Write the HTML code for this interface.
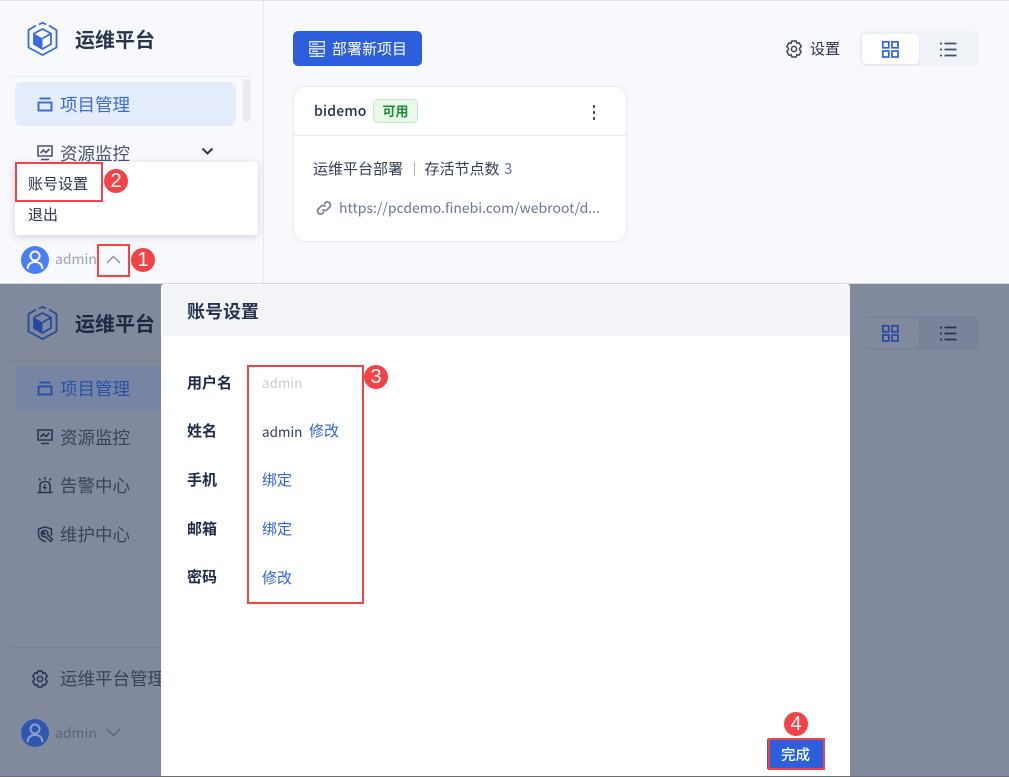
<!DOCTYPE html>
<html lang="zh-CN"><head><meta charset="utf-8"><title>运维平台</title>
<style>
html,body{margin:0;padding:0;width:1009px;height:777px;overflow:hidden;background:#f8f9fd}
body{position:relative;font-family:"Noto Sans CJK SC","Liberation Sans",sans-serif;color:#1e2a45}
.a{position:absolute}
.t{position:absolute;white-space:nowrap;line-height:24px;height:24px}
svg{position:absolute;overflow:visible;fill:none}
.rb{position:absolute;border:2px solid #f44346;box-sizing:border-box}
.bd{position:absolute;width:24px;height:24px;border-radius:50%;background:#f44346;color:#fff;font:20px/24px "Liberation Sans",sans-serif;text-align:center}
</style></head><body>
<div class="a" style="left:0;top:0;width:1009px;height:1px;background:#e2e2e2"></div>
<div class="a" style="left:263px;top:1px;width:1px;height:282px;background:#e6e8ef"></div>
<div class="a" style="left:10px;top:76px;width:243px;height:1px;background:#e8eaf0"></div>

<!-- top logo -->
<svg style="left:27px;top:22px" width="31" height="34" viewBox="0 0 31 34"><path d="M9 3.5 1.500 8v17.500L15.500 33 29.500 25.500V8L22 3.500" stroke="#386bdf" stroke-width="1.800"/><path d="M12 2.500 15.500.8 19 2.500" stroke="#386bdf" stroke-width="1.800"/><path d="M7 11.500 15.500 7 24 11.500V22L15.500 27 7 22Z" stroke="#386bdf" stroke-width="1.800"/><path d="M7 11.500 15.500 16.500V27L7 22Z" fill="#386bdf"/><path d="M15.500 16.500 24 11.500" stroke="#386bdf" stroke-width="1.800"/></svg>
<div class="t" style="left:75px;top:27px;font-size:20px;font-weight:700;color:#26344f">运维平台</div>

<div class="a" style="left:15px;top:82px;width:221px;height:44px;border-radius:6px;background:#e5edfc"></div>
<div class="a" style="left:243px;top:79px;width:8px;height:43px;border-radius:4px;background:#e9ebf0"></div>
<svg style="left:37px;top:97px" width="16" height="15" stroke="#3f6fdd" stroke-width="2"><path d="M2.500 1.500H13.500M.5 5.500H15.500M1.500 5.500V13.500H14.500V5.500"/></svg>
<div class="t" style="left:60px;top:93px;font-size:17.500px;color:#3b6ade">项目管理</div>
<svg style="left:37px;top:145px" width="16" height="16" stroke="#4a5670" stroke-width="1.600"><path d="M1 1H15V11H1ZM4 14.500H12M3.500 8 6.500 5 9 7.500 12.500 4"/></svg>
<div class="t" style="left:60px;top:142px;font-size:17.500px;color:#47536b">资源监控</div>
<svg style="left:201px;top:147px" width="13" height="9" stroke="#2a3650" stroke-width="2"><path d="M1.500 1.500 6.500 6.500 11.500 1.500"/></svg>
<div class="a" style="left:10px;top:174px;width:243px;height:1px;background:#e8eaf0"></div>

<!-- dropdown -->
<div class="a" style="left:15px;top:162px;width:243px;height:73px;background:#fff;border-radius:3px;box-shadow:0 2px 8px rgba(40,50,80,.18)"></div>
<div class="t" style="left:28px;top:172px;font-size:15px;color:#26324b">账号设置</div>
<div class="t" style="left:28px;top:203px;font-size:15px;color:#26324b">退出</div>
<div class="rb" style="left:15px;top:162px;width:88px;height:40px"></div>
<div class="bd" style="left:104px;top:169px">2</div>

<!-- top user -->
<div class="a" style="left:21px;top:246px;width:28px;height:28px;border-radius:50%;background:#4a7ffa"></div>
<svg style="left:21px;top:246px" width="28" height="28" stroke="#fff" stroke-width="2"><circle cx="14" cy="10" r="4.500"/><path d="M6.500 23C7 18 10 16 14 16S21 18 21.500 23"/></svg>
<div class="t" style="left:55px;top:247px;font-size:14px;color:#9aa3b3">admin</div>
<svg style="left:106px;top:255px" width="15" height="9" stroke="#8b94a5" stroke-width="1.400"><path d="M1 8 7.500 1.500 14 8"/></svg>
<div class="rb" style="left:97px;top:244px;width:33px;height:33px"></div>
<div class="bd" style="left:131px;top:248px">1</div>

<!-- main top -->
<div class="a" style="left:293px;top:31px;width:129px;height:35px;border-radius:5px;background:#2d5fdc"></div>
<svg style="left:309px;top:41px" width="17" height="17" stroke="#dfe7fb" stroke-width="1.300"><path d="M.7.700H15.300V5.500H.7ZM.7 7.800H15.300V12.500H.7ZM8 12.500V15M.7 15.300H15.300M3 3.100H9M3 10.200H9"/></svg>
<div class="t" style="left:332px;top:37px;font-size:15px;color:#fff">部署新项目</div>

<div class="a" style="left:293px;top:86px;width:334px;height:156px;box-sizing:border-box;background:#fff;border:1px solid #e6e9f0;border-radius:12px"></div>
<div class="a" style="left:294px;top:135px;width:332px;height:1px;background:#e8ebf1"></div>
<div class="t" style="left:314px;top:99px;font-size:14px;font-weight:500;letter-spacing:.2px;color:#25314a">bidemo</div>
<div class="a" style="left:373px;top:99px;width:45px;height:24px;box-sizing:border-box;background:#e9f8e9;border:1px solid #c1e9c3;border-radius:5px;color:#1f8a39;font-size:13px;font-weight:700;line-height:22px;text-align:center">可用</div>
<div class="a" style="left:592.500px;top:105px;width:2px;height:3px;border-radius:1px;background:#2a3650;box-shadow:0 6px 0 #2a3650,0 12px 0 #2a3650"></div>
<div class="t" style="left:313px;top:157px;font-size:15px;color:#313d55">运维平台部署</div>
<div class="a" style="left:414px;top:162px;width:1px;height:14px;background:#a8b0bd"></div>
<div class="t" style="left:424.500px;top:157px;font-size:15px;color:#313d55">存活节点数</div>
<div class="t" style="left:504px;top:157px;font-size:15px;color:#5a6ec4">3</div>
<svg style="left:316px;top:200px" width="16" height="16" stroke="#6f7a8e" stroke-width="1.600"><path d="M6.500 9.500C8 11 10 10.800 11.200 9.600L14 6.800C16 4.500 12.500 .300 9.800 2.400L8 4.200M9.500 6.500C8 5 6 5.200 4.800 6.400L2 9.200C0 11.500 3.500 15.700 6.200 13.600L8 11.800"/></svg>
<div class="t" style="left:339px;top:196px;font-size:14px;color:#6c788d">https://pcdemo.finebi.com/webroot/d...</div>

<svg style="left:785px;top:40px" width="18" height="18" stroke="#3d4860" stroke-width="1.500"><path d="M6.800 1H11.200L11.800 3.400 14 2.700 16.200 6.500 14.500 8.500 14.500 9.500 16.200 11.500 14 15.300 11.800 14.600 11.200 17H6.800L6.200 14.600 4 15.300 1.800 11.500 3.500 9.500V8.500L1.800 6.500 4 2.700 6.200 3.400Z" stroke-linejoin="round"/><circle cx="9" cy="9" r="2.600"/></svg>
<div class="t" style="left:810px;top:37px;font-size:15px;color:#25314a">设置</div>
<div class="a" style="left:859px;top:31px;width:120px;height:35px;border-radius:6px;background:#eff2f7"></div>
<div class="a" style="left:862px;top:34px;width:57px;height:30px;border-radius:5px;background:#fff;box-shadow:0 1px 3px rgba(40,50,80,.08)"></div>
<svg style="left:882px;top:41px" width="17" height="17" stroke="#2f62dc" stroke-width="1.700"><rect x=".8" y=".8" width="6" height="6"/><rect x="10" y=".8" width="6" height="6"/><rect x=".8" y="10" width="6" height="6"/><rect x="10" y="10" width="6" height="6"/></svg>
<svg style="left:940px;top:42px" width="17" height="15" stroke="#44506a" stroke-width="1.800"><path d="M4.500 1.500H16.500M4.500 7.500H16.500M4.500 13.500H16.500M0 1.500H2M0 7.500H2M0 13.500H2"/></svg>

<!-- lower dimmed -->
<div class="a" style="left:0;top:283px;width:1009px;height:494px;background:#808a9c"></div>
<div class="a" style="left:0;top:283px;width:1009px;height:1px;background:#d9dbe0"></div>
<div class="a" style="left:0;top:776px;width:1009px;height:1px;background:#6c6c6c"></div>
<div class="a" style="left:10px;top:360px;width:151px;height:1px;background:#78828f"></div>
<svg style="left:27px;top:306px" width="31" height="34" viewBox="0 0 31 34"><path d="M9 3.500 1.500 8v17.500L15.500 33 29.500 25.500V8L22 3.500" stroke="#234a9e" stroke-width="1.800"/><path d="M12 2.500 15.500.8 19 2.500" stroke="#234a9e" stroke-width="1.800"/><path d="M7 11.500 15.500 7 24 11.500V22L15.500 27 7 22Z" stroke="#234a9e" stroke-width="1.800"/><path d="M7 11.500 15.500 16.500V27L7 22Z" fill="#234a9e"/><path d="M15.500 16.500 24 11.500" stroke="#234a9e" stroke-width="1.800"/></svg>
<div class="t" style="left:75px;top:311px;font-size:20px;font-weight:700;color:#1c2740">运维平台</div>
<div class="a" style="left:15px;top:366px;width:146px;height:44px;border-radius:6px 0 0 6px;background:#7585a3"></div>
<svg style="left:37px;top:381px" width="16" height="15" stroke="#2c50a5" stroke-width="2"><path d="M2.500 1.500H13.500M.5 5.500H15.500M1.500 5.500V13.500H14.500V5.500"/></svg>
<div class="t" style="left:60px;top:377px;font-size:17.500px;color:#2c50a5">项目管理</div>
<svg style="left:37px;top:429px" width="16" height="16" stroke="#283450" stroke-width="1.600"><path d="M1 1H15V11H1ZM4 14.500H12M3.500 8 6.500 5 9 7.500 12.500 4"/></svg>
<div class="t" style="left:60px;top:426px;font-size:17.500px;color:#374359">资源监控</div>
<svg style="left:37px;top:477px" width="16" height="17" stroke="#283450" stroke-width="1.600"><path d="M3 15V9C3 6 5 4.500 8 4.500S13 6 13 9V15M.5 15.500H15.500M8 0V2.500M2 1.500 3.500 3.500M14 1.500 12.500 3.500"/><path d="M8.500 7 6.500 10.500H9L7.500 13" stroke-width="1.200"/></svg>
<div class="t" style="left:60px;top:474px;font-size:17.500px;color:#374359">告警中心</div>
<svg style="left:37px;top:526px" width="17" height="17" stroke="#283450" stroke-width="1.500"><path d="M8 .8 14.500 3V8C14.500 9 14.300 9.500 14 10M9 15.500C4 14.500 1.500 11.500 1.500 8V3L8 .8"/><path d="M5 5.500C6.500 3.800 9.500 4 10.500 6 11 7 10.800 8 10.500 8.500L15.500 13.500 13.500 15.500 8.500 10.500C7 11 5 10.500 4.500 9 4.200 8 4.200 7 4.500 6.500L7 8.500 8 7.500Z"/></svg>
<div class="t" style="left:60px;top:523px;font-size:17.500px;color:#374359">维护中心</div>
<div class="a" style="left:10px;top:647px;width:151px;height:1px;background:#78828f"></div>
<svg style="left:31px;top:670px" width="18" height="18" stroke="#283450" stroke-width="1.500"><path d="M6.800 1H11.200L11.800 3.400 14 2.700 16.200 6.500 14.500 8.500 14.500 9.500 16.200 11.500 14 15.300 11.800 14.600 11.200 17H6.800L6.200 14.600 4 15.300 1.800 11.500 3.500 9.500V8.500L1.800 6.500 4 2.700 6.200 3.400Z" stroke-linejoin="round"/><circle cx="9" cy="9" r="2.600"/></svg>
<div class="t" style="left:60px;top:667px;font-size:17.500px;color:#374359">运维平台管理</div>
<div class="a" style="left:21px;top:719px;width:28px;height:28px;border-radius:50%;background:#2f57b0"></div>
<svg style="left:21px;top:719px" width="28" height="28" stroke="#8fa0c6" stroke-width="2"><circle cx="14" cy="10" r="4.500"/><path d="M6.500 23C7 18 10 16 14 16S21 18 21.500 23"/></svg>
<div class="t" style="left:55px;top:721px;font-size:14px;color:#59647a">admin</div>
<svg style="left:106px;top:728px" width="15" height="9" stroke="#59647a" stroke-width="1.400"><path d="M1 1 7.500 7.500 14 1"/></svg>
<div class="a" style="left:862px;top:316px;width:117px;height:34px;border-radius:6px;background:#79849a"></div>
<div class="a" style="left:862px;top:318px;width:57px;height:30px;border-radius:5px;background:#808a9c"></div>
<svg style="left:882px;top:325px" width="17" height="17" stroke="#234a9e" stroke-width="1.700"><rect x=".8" y=".8" width="6" height="6"/><rect x="10" y=".8" width="6" height="6"/><rect x=".8" y="10" width="6" height="6"/><rect x="10" y="10" width="6" height="6"/></svg>
<svg style="left:940px;top:326px" width="17" height="15" stroke="#283450" stroke-width="1.800"><path d="M4.500 1.500H16.500M4.500 7.500H16.500M4.500 13.500H16.500M0 1.500H2M0 7.500H2M0 13.500H2"/></svg>

<!-- modal -->
<div class="a" style="left:161px;top:284px;width:689px;height:492px;background:#fff;border-radius:3px 3px 0 0"></div>
<div class="a" style="left:162px;top:285px;width:688px;height:51px;background:#f2f4f8;border-radius:3px 3px 0 0"></div>
<div class="t" style="left:187px;top:299px;font-size:18px;font-weight:700;color:#26344f">账号设置</div>
<div class="t" style="left:187px;top:371px;font-size:15px;font-weight:700;color:#1e2a45">用户名</div>
<div class="t" style="left:187px;top:419px;font-size:15px;font-weight:700;color:#1e2a45">姓名</div>
<div class="t" style="left:187px;top:468px;font-size:15px;font-weight:700;color:#1e2a45">手机</div>
<div class="t" style="left:187px;top:517px;font-size:15px;font-weight:700;color:#1e2a45">邮箱</div>
<div class="t" style="left:187px;top:565px;font-size:15px;font-weight:700;color:#1e2a45">密码</div>
<div class="t" style="left:262px;top:370px;font-size:13.500px;color:#c9ced7">admin</div>
<div class="t" style="left:262px;top:419px;font-size:13.500px;color:#333e55">admin</div>
<div class="t" style="left:309px;top:419px;font-size:15px;color:#2f62dc">修改</div>
<div class="t" style="left:262px;top:468px;font-size:15px;color:#2f62dc">绑定</div>
<div class="t" style="left:262px;top:517px;font-size:15px;color:#2f62dc">绑定</div>
<div class="t" style="left:262px;top:566px;font-size:15px;color:#2f62dc">修改</div>
<div class="rb" style="left:247px;top:365px;width:117px;height:239px"></div>
<div class="bd" style="left:364px;top:365px">3</div>

<div class="a" style="left:767px;top:739px;width:58px;height:30px;background:#2d5fdc"></div>
<div class="t" style="left:781px;top:743px;font-size:14.500px;font-weight:500;color:#fff">完成</div>
<div class="rb" style="left:768px;top:738px;width:57px;height:32px"></div>
<div class="bd" style="left:784px;top:712px">4</div>
</body></html>
